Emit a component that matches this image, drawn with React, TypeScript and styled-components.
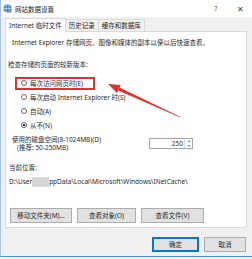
import styled, { createGlobalStyle } from 'styled-components'

const GlobalStyle = createGlobalStyle`
  html, body {
    margin: 0;
    padding: 0;
    background: #fff;
  }
  body {
    width: 252px;
    height: 259px;
    overflow: hidden;
  }
`

const Window = styled.div`
  position: relative;
  width: 251px;
  height: 256px;
  border-left: 1px solid #a9c3dc;
  border-bottom: 1px solid #4a93d6;
  background: #f0f0f0;
  display: flex;
  flex-direction: column;
  font-family: "Noto Sans", "Noto Sans CJK SC", sans-serif;
  font-size: 6.5px;
  color: #2a2a2a;
`

const TitleBar = styled.div`
  height: 17px;
  background: #fff;
  display: flex;
  align-items: center;
  padding-left: 2px;
`

const TitleText = styled.span`
  margin-left: 3px;
  color: #222;
`

const TitleButton = styled.span<{ $first?: boolean }>`
  width: 24px;
  text-align: center;
  color: #444;
  font-size: ${p => (p.$first ? '6.5px' : '8px')};
  margin-left: ${p => (p.$first ? 'auto' : '0')};
`

const TabStrip = styled.div`
  height: 14px;
  display: flex;
  align-items: flex-end;
  padding-left: 4px;
`

const Tab = styled.div<{ $active?: boolean }>`
  position: relative;
  z-index: ${p => (p.$active ? 2 : 1)};
  height: ${p => (p.$active ? '14px' : '12px')};
  line-height: ${p => (p.$active ? '13px' : '12px')};
  margin-bottom: ${p => (p.$active ? '-1px' : '0')};
  padding: 0 3px;
  box-sizing: border-box;
  border: 1px solid #d9d9d9;
  border-bottom: none;
  background: ${p => (p.$active ? '#fff' : '#f0f0f0')};
  & + & {
    margin-left: -1px;
  }
`

const Panel = styled.div`
  position: relative;
  height: 197px;
  margin: 0 5px 0 4px;
  box-sizing: border-box;
  border: 1px solid #d9d9d9;
  background: #fff;
  display: flex;
  flex-direction: column;
`

const Line = styled.div<{ $top: number; $left: number }>`
  height: 10px;
  line-height: 10px;
  margin-top: ${p => p.$top}px;
  margin-left: ${p => p.$left}px;
  white-space: nowrap;
`

const RadioList = styled.div`
  margin-top: 6px;
  display: flex;
  flex-direction: column;
`

const RadioRow = styled.div`
  height: 14px;
  display: flex;
  align-items: center;
`

const RadioLabel = styled.div<{ $highlight?: boolean }>`
  height: 13px;
  box-sizing: border-box;
  margin-left: 9px;
  padding-left: 4px;
  width: ${p => (p.$highlight ? '80px' : 'auto')};
  display: inline-flex;
  align-items: center;
  gap: 3px;
  border: 2px solid ${p => (p.$highlight ? '#e2302c' : 'transparent')};
  white-space: nowrap;
`

const RadioDot = styled.span<{ $checked?: boolean }>`
  width: 6px;
  height: 6px;
  box-sizing: border-box;
  border-radius: 50%;
  border: 1px solid #666;
  background: ${p => (p.$checked ? 'radial-gradient(circle, #333 0 1.2px, #fff 1.5px)' : '#fff')};
  flex-shrink: 0;
`

const DiskRow = styled.div`
  margin-top: 4px;
  height: 16px;
  display: flex;
  padding-left: 6px;
`

const DiskLabel = styled.div`
  flex: 0 0 137px;
  line-height: 8px;
  white-space: nowrap;
`

const Indent = styled.div`
  padding-left: 5px;
`

const SpinBox = styled.div`
  width: 44px;
  height: 11px;
  margin-top: 2px;
  box-sizing: border-box;
  border: 1px solid #a5a5a5;
  background: #fff;
  display: flex;
`

const SpinValue = styled.div`
  flex: 1;
  text-align: right;
  line-height: 9px;
  padding-right: 1px;
`

const SpinButtons = styled.div`
  width: 7px;
  display: flex;
  flex-direction: column;
  border-left: 1px solid #ddd;
`

const SpinArrow = styled.div<{ $down?: boolean }>`
  flex: 1;
  display: flex;
  align-items: center;
  justify-content: center;
  &::after {
    content: '';
    border-left: 1.5px solid transparent;
    border-right: 1.5px solid transparent;
    ${p => (p.$down ? 'border-top: 2px solid #555;' : 'border-bottom: 2px solid #555;')}
  }
`

const Redact = styled.span`
  display: inline-block;
  width: 17px;
  height: 10px;
  vertical-align: top;
  background: #d6d6d6;
  filter: blur(0.6px);
`

const ButtonRow = styled.div`
  margin-top: 21px;
  padding-left: 4px;
  display: flex;
  gap: 5px;
`

const Button = styled.div<{ $width: number; $primary?: boolean }>`
  width: ${p => p.$width}px;
  height: 15px;
  box-sizing: border-box;
  border: 1px solid ${p => (p.$primary ? '#0078d7' : '#adadad')};
  box-shadow: ${p => (p.$primary ? 'inset 0 0 0 1px #0078d7' : 'none')};
  background: #e1e1e1;
  line-height: 13px;
  text-align: center;
  white-space: nowrap;
`

const Footer = styled.div`
  display: flex;
  justify-content: flex-end;
  gap: 5px;
  padding: 9px 6px 0 0;
`

const Overlay = styled.svg`
  position: absolute;
  left: -1px;
  top: 0;
  pointer-events: none;
`

function GlobeIcon() {
  return (
    <svg width="9" height="9" viewBox="0 0 9 9">
      <circle cx="4.5" cy="4.5" r="4" fill="#3f82c9" />
      <ellipse cx="4.5" cy="4.5" rx="1.8" ry="4" fill="none" stroke="#cfe3f5" strokeWidth="0.7" />
      <line x1="0.5" y1="4.5" x2="8.5" y2="4.5" stroke="#cfe3f5" strokeWidth="0.7" />
      <circle cx="6.8" cy="6.8" r="1.9" fill="#8a8f96" />
    </svg>
  )
}

export default function App() {
  const radios = [
    { label: '每次访问网页时(E)', highlight: true },
    { label: '每次启动 Internet Explorer 时(S)' },
    { label: '自动(A)' },
    { label: '从不(N)', checked: true },
  ]

  return (
    <Window>
      <GlobalStyle />
      <TitleBar>
        <GlobeIcon />
        <TitleText>网站数据设置</TitleText>
        <TitleButton $first>?</TitleButton>
        <TitleButton>✕</TitleButton>
      </TitleBar>
      <TabStrip>
        <Tab $active>Internet 临时文件</Tab>
        <Tab>历史记录</Tab>
        <Tab>缓存和数据库</Tab>
      </TabStrip>
      <Panel>
        <Line $top={6} $left={6}>Internet Explorer 存储网页、图像和媒体的副本以便以后快速查看。</Line>
        <Line $top={12} $left={2}>检查存储的页面的较新版本:</Line>
        <RadioList>
          {radios.map(r => (
            <RadioRow key={r.label}>
              <RadioLabel $highlight={r.highlight}>
                <RadioDot $checked={r.checked} />
                {r.label}
              </RadioLabel>
            </RadioRow>
          ))}
        </RadioList>
        <DiskRow>
          <DiskLabel>
            <div>使用的磁盘空间(8-1024MB)(D)</div>
            <Indent>(推荐: 50-250MB)</Indent>
          </DiskLabel>
          <SpinBox>
            <SpinValue>250</SpinValue>
            <SpinButtons>
              <SpinArrow />
              <SpinArrow $down />
            </SpinButtons>
          </SpinBox>
        </DiskRow>
        <Line $top={11} $left={3}>当前位置:</Line>
        <Line $top={4} $left={3}>
          D:\User<Redact />ppData\Local\Microsoft\Windows\INetCache\
        </Line>
        <ButtonRow>
          <Button $width={62}>移动文件夹(M)...</Button>
          <Button $width={59}>查看对象(O)</Button>
          <Button $width={63}>查看文件(V)</Button>
        </ButtonRow>
      </Panel>
      <Footer>
        <Button $width={47} $primary>确定</Button>
        <Button $width={42}>取消</Button>
      </Footer>
      <Overlay width="252" height="257" viewBox="0 0 252 257">
        <polygon points="118.3,90.4 119.5,87.6 180.2,116.8 179.8,117.2" fill="#e2302c" />
        <polygon points="108,84 120.8,84.9 117,93.1" fill="#e2302c" />
      </Overlay>
    </Window>
  )
}
